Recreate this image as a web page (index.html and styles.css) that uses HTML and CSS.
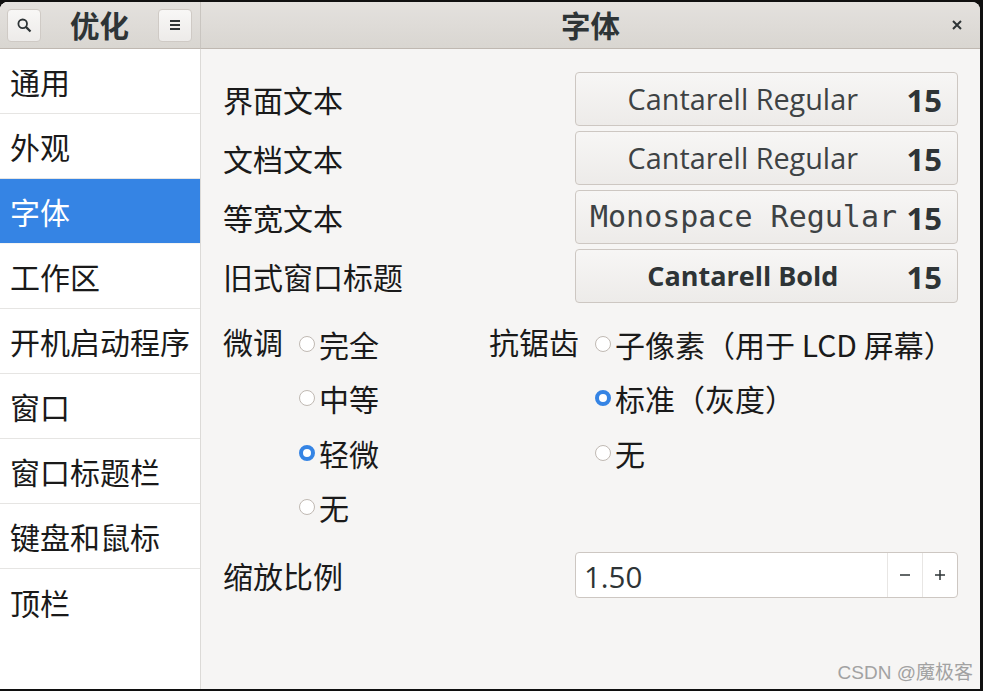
FILE: index.html
```html
<!DOCTYPE html>
<html lang="zh-CN">
<head>
    <meta charset="UTF-8">
    <meta name="viewport" content="width=device-width, initial-scale=1.0">
    <title>优化</title>
    <link rel="stylesheet" href="styles.css">
</head>
<body>
    <div class="window">
        <!-- 左侧：标题栏 + 导航 -->
        <div class="side-pane">
            <div class="titlebar side-title">
                <button class="tool-btn" aria-label="搜索">
                    <svg width="16" height="16" viewBox="0 0 16 16"><circle cx="6.7" cy="6.8" r="4.3" fill="none" stroke="#2e3436" stroke-width="1.8"/><path d="M9.9 9.9 14.5 14.5" stroke="#2e3436" stroke-width="2.2" fill="none"/></svg>
                </button>
                <span class="title-text">优化</span>
                <button class="tool-btn" aria-label="菜单">
                    <svg width="16" height="16" viewBox="0 0 16 16"><path d="M3 4h10M3 8h10M3 12h10" stroke="#2e3436" stroke-width="1.8" fill="none"/></svg>
                </button>
            </div>
            <ul class="nav">
                <li>通用</li>
                <li>外观</li>
                <li class="active">字体</li>
                <li>工作区</li>
                <li>开机启动程序</li>
                <li>窗口</li>
                <li>窗口标题栏</li>
                <li>键盘和鼠标</li>
                <li>顶栏</li>
            </ul>
        </div>

        <!-- 右侧：字体设置 -->
        <div class="main-pane">
            <div class="titlebar main-title">
                <span class="title-text">字体</span>
                <svg class="close-icon" width="10" height="10" viewBox="0 0 10 10"><path d="M1 1 9 9M9 1 1 9" stroke="#2e3436" stroke-width="2" fill="none"/></svg>
            </div>
            <div class="content">
                <div class="font-rows">
                    <div class="font-row">
                        <span class="label">界面文本</span>
                        <button class="font-btn"><span class="font-name">Cantarell Regular</span><span class="font-size">15</span></button>
                    </div>
                    <div class="font-row">
                        <span class="label">文档文本</span>
                        <button class="font-btn"><span class="font-name">Cantarell Regular</span><span class="font-size">15</span></button>
                    </div>
                    <div class="font-row">
                        <span class="label">等宽文本</span>
                        <button class="font-btn"><span class="font-name mono">Monospace Regular</span><span class="font-size">15</span></button>
                    </div>
                    <div class="font-row">
                        <span class="label">旧式窗口标题</span>
                        <button class="font-btn"><span class="font-name bold">Cantarell Bold</span><span class="font-size">15</span></button>
                    </div>
                </div>

                <div class="options">
                    <div class="option-group hinting">
                        <span class="label">微调</span>
                        <div class="radios">
                            <div class="radio-row"><span class="radio"></span>完全</div>
                            <div class="radio-row"><span class="radio"></span>中等</div>
                            <div class="radio-row"><span class="radio checked"></span>轻微</div>
                            <div class="radio-row"><span class="radio"></span>无</div>
                        </div>
                    </div>
                    <div class="option-group antialias">
                        <span class="label">抗锯齿</span>
                        <div class="radios">
                            <div class="radio-row"><span class="radio"></span>子像素（用于 LCD 屏幕）</div>
                            <div class="radio-row"><span class="radio checked"></span>标准（灰度）</div>
                            <div class="radio-row"><span class="radio"></span>无</div>
                        </div>
                    </div>
                </div>

                <div class="font-row scale-row">
                    <span class="label">缩放比例</span>
                    <div class="spin">
                        <span class="spin-value">1.50</span>
                        <span class="spin-btn">
                            <svg width="10" height="10" viewBox="0 0 10 10"><path d="M0 5h10" stroke="#2e3436" stroke-width="1.5" fill="none"/></svg>
                        </span>
                        <span class="spin-btn">
                            <svg width="10" height="10" viewBox="0 0 10 10"><path d="M0 5h10M5 0v10" stroke="#2e3436" stroke-width="1.5" fill="none"/></svg>
                        </span>
                    </div>
                </div>
            </div>
        </div>
        <div class="watermark">CSDN @魔极客</div>
    </div>
</body>
</html>
```

FILE: styles.css
```css
* {
    box-sizing: border-box;
}
html, body {
    height: 100%;
}
body {
    margin: 0;
    padding: 2px 3px 2px 0;
    background-color: #101010;
    color: #2e3436;
    font-family: "Noto Sans", "Noto Sans CJK SC", sans-serif;
    overflow: hidden;
}
.window {
    position: relative;
    display: flex;
    height: 100%;
    border-radius: 8px 8px 0 0;
    overflow: hidden;
    background-color: #f6f5f4;
}
.side-pane {
    display: flex;
    flex-direction: column;
    width: 201px;
    flex-shrink: 0;
    background-color: #fff;
    border-right: 1px solid #dcdad7;
}
.main-pane {
    display: flex;
    flex-direction: column;
    flex: 1;
}
.titlebar {
    display: flex;
    align-items: center;
    height: 47px;
    flex-shrink: 0;
    background: linear-gradient(to bottom, #e4e1de, #d9d6d1);
    border-bottom: 1px solid #bfb8b1;
}
.side-title {
    justify-content: space-between;
    padding: 6px 8px 6px 7px;
    margin-right: -1px;
    border-right: 1px solid #c9c5c0;
}
.main-title {
    position: relative;
    justify-content: center;
}
.title-text {
    font-family: "Noto Sans CJK SC", sans-serif;
    font-size: 29.5px;
    font-weight: 700;
    color: #2e3436;
    line-height: 1;
}
.tool-btn {
    display: flex;
    align-items: center;
    justify-content: center;
    width: 34px;
    height: 33px;
    padding: 0;
    border: 1px solid #cfcac5;
    border-radius: 4px;
    background: linear-gradient(to bottom, #f8f7f6, #edebe9);
}
.close-icon {
    position: absolute;
    right: 18px;
    top: 18px;
}
.nav {
    list-style: none;
    margin: 0;
    padding: 0;
}
.nav li {
    display: flex;
    align-items: center;
    height: 65px;
    padding-left: 10px;
    font-family: "Noto Sans CJK SC", sans-serif;
    font-size: 30px;
    color: #1a1a1a;
    border-bottom: 1px solid #e6e5e3;
}
.nav li:last-child {
    border-bottom: none;
}
.nav li.active {
    background-color: #3584e4;
    background-clip: padding-box;
    color: #fff;
    border-bottom-color: #f4f4f3;
}
.content {
    padding: 23px 22px 0 22px;
}
.font-rows {
    display: flex;
    flex-direction: column;
    gap: 5px;
}
.font-row {
    display: flex;
    align-items: center;
    justify-content: space-between;
}
.label {
    font-family: "Noto Sans CJK SC", sans-serif;
    font-size: 30px;
    line-height: 40px;
    color: #1a1a1a;
}
.font-btn {
    position: relative;
    display: flex;
    align-items: center;
    width: 383px;
    height: 54px;
    padding: 0 15px 0 14px;
    border: 1px solid #cdc7c2;
    border-radius: 4px;
    background: linear-gradient(to bottom, #f7f6f5, #edebe9);
    color: #2e3436;
}
.font-name {
    flex: 1;
    text-align: center;
    font-family: "Open Sans", sans-serif;
    font-size: 28.8px;
    color: #3d4244;
    padding-right: 11px;
    padding-bottom: 2px;
}
.font-name.mono {
    font-family: "DejaVu Sans Mono", monospace;
    font-size: 30px;
    padding-right: 0;
    text-align: left;
    white-space: nowrap;
}
.font-name.bold {
    font-size: 27px;
    font-weight: 700;
    color: #2e3436;
}
.font-size {
    font-family: "Open Sans", sans-serif;
    font-weight: 700;
    font-size: 31px;
    padding-top: 2px;
}
.options {
    display: flex;
    margin-top: 14px;
}
.option-group {
    display: flex;
    align-items: flex-start;
}
.hinting {
    width: 266px;
}
.hinting .label {
    width: 76px;
    margin-top: 4px;
}
.antialias .label {
    width: 106px;
    margin-top: 4px;
}
.radios {
    display: flex;
    flex-direction: column;
}
.radio-row {
    display: flex;
    align-items: center;
    height: 54.3px;
    font-family: "Noto Sans CJK SC", sans-serif;
    font-size: 30px;
    color: #1a1a1a;
}
.radio {
    width: 16px;
    height: 16px;
    margin-right: 4px;
    flex-shrink: 0;
    border: 1px solid #c0b9b3;
    border-radius: 50%;
    background: #fff;
}
.radio.checked {
    border: 4.5px solid #3584e4;
    background: #fff;
}
.scale-row {
    margin-top: 18px;
}
.spin {
    display: flex;
    align-items: stretch;
    width: 383px;
    height: 46px;
    background-color: #fff;
    border: 1px solid #cdc7c2;
    border-radius: 4px;
}
.spin-value {
    flex: 1;
    padding-left: 8px;
    font-family: "Open Sans", sans-serif;
    font-size: 29.5px;
    line-height: 47px;
}
.spin-btn {
    display: flex;
    align-items: center;
    justify-content: center;
    width: 35px;
    border-left: 1px solid #e8e6e4;
}
.watermark {
    position: absolute;
    right: 7px;
    bottom: 5px;
    font-family: "Liberation Sans", "Noto Sans CJK SC", sans-serif;
    font-size: 19px;
    color: #a2a2a2;
}
```
